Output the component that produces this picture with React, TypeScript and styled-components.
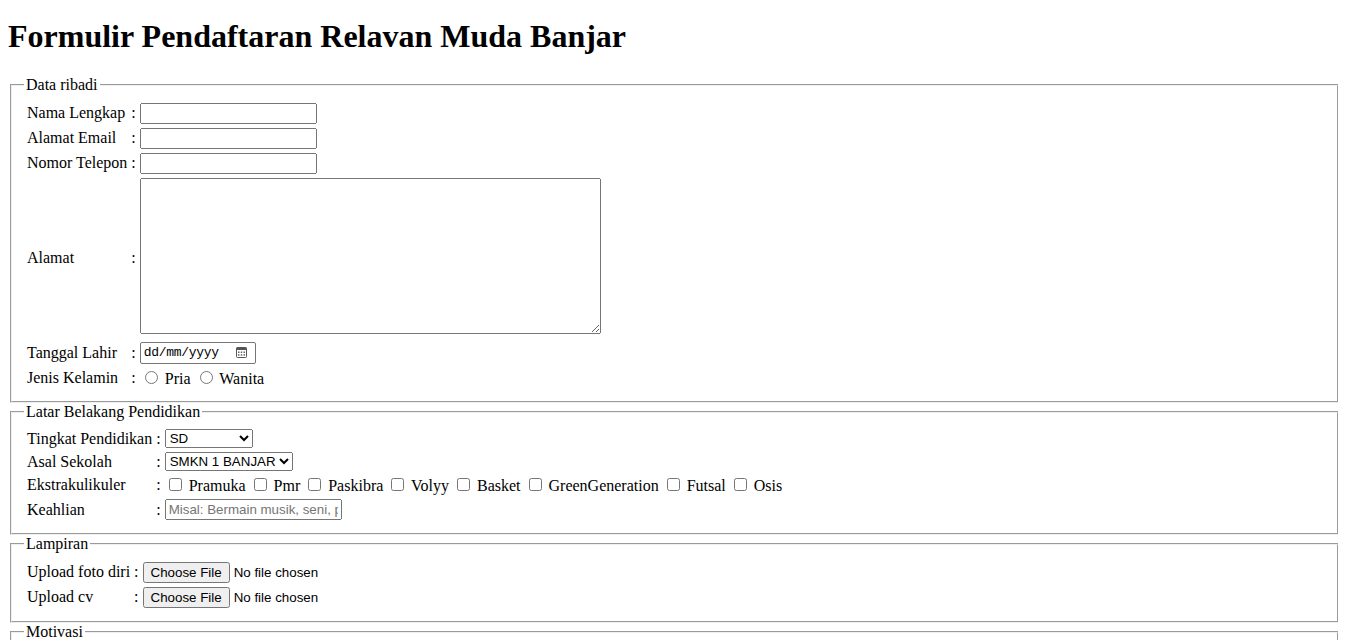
import React from "react";
import styled, { createGlobalStyle } from "styled-components";

const Global = createGlobalStyle`
  body {
    margin: 8px;
    font-family: "Liberation Serif", "Times New Roman", serif;
    font-size: 16px;
    color: #000;
    background: #fff;
  }
`;

const Title = styled.h1`
  font-size: 2em;
  font-weight: bold;
  margin: 9.5px 0 21.44px;
`;

const Fieldset = styled.fieldset`
  margin: 0 -1px 0 2px;
  padding: 0.35em 0.75em 0.625em;
`;

const Legend = styled.legend`
  padding: 0 2px;
`;

const FormTable = styled.table`
  border-spacing: 2px;
`;

const Cell = styled.td`
  padding: 1px;
  vertical-align: middle;
`;

const ColonCell = styled.td`
  padding: 1px;
  vertical-align: middle;
`;

const TextInput = styled.input`
  box-sizing: border-box;
  width: 177px;
  height: 21px;
  font-family: "Liberation Sans", Arial, sans-serif;
  font-size: 13.33px;
`;

const AddressArea = styled.textarea`
  box-sizing: border-box;
  width: 461px;
  height: 156px;
`;

const DateBox = styled.span`
  box-sizing: border-box;
  display: inline-flex;
  align-items: center;
  justify-content: space-between;
  width: 116px;
  height: 22px;
  padding: 0 8px 0 3px;
  border: 1px solid #767676;
  border-radius: 2px;
  vertical-align: middle;
  font-family: "Liberation Mono", "DejaVu Sans Mono", monospace;
  font-size: 13px;
  color: #000;
  background: #fff;
`;

const DateText = styled.span`
  letter-spacing: -0.3px;
`;

const Select = styled.select<{ $w: number }>`
  box-sizing: border-box;
  width: ${(p) => p.$w}px;
  height: 19px;
  font-family: "Liberation Sans", Arial, sans-serif;
  font-size: 13.33px;
`;

const OptionLabel = styled.label``;

const Row: React.FC<{ label: string; children: React.ReactNode }> = ({ label, children }) => (
  <tr>
    <Cell>{label}</Cell>
    <ColonCell>:</ColonCell>
    <Cell>{children}</Cell>
  </tr>
);

const CalendarIcon = () => (
  <svg width="11" height="11" viewBox="0 0 11 11" aria-hidden="true">
    <rect x="0.5" y="0.5" width="10" height="10" rx="1" fill="none" stroke="#555" />
    <rect x="0.5" y="0.5" width="10" height="2.5" fill="#555" />
    <rect x="2" y="4.5" width="1.5" height="1.5" fill="#666" />
    <rect x="4.75" y="4.5" width="1.5" height="1.5" fill="#666" />
    <rect x="7.5" y="4.5" width="1.5" height="1.5" fill="#666" />
    <rect x="2" y="7.2" width="1.5" height="1.5" fill="#666" />
    <rect x="4.75" y="7.2" width="1.5" height="1.5" fill="#666" />
    <rect x="7.5" y="7.2" width="1.5" height="1.5" fill="#666" />
  </svg>
);

const extras = ["Pramuka", "Pmr", "Paskibra", "Volyy", "Basket", "GreenGeneration", "Futsal", "Osis"];

export default function App() {
  return (
    <>
      <Global />
      <Title>Formulir Pendaftaran Relavan Muda Banjar</Title>
      <form>
        <Fieldset>
          <Legend>Data ribadi</Legend>
          <FormTable>
            <tbody>
              <Row label="Nama Lengkap">
                <TextInput type="text" />
              </Row>
              <Row label="Alamat Email">
                <TextInput type="email" />
              </Row>
              <Row label="Nomor Telepon">
                <TextInput type="tel" />
              </Row>
              <Row label="Alamat">
                <AddressArea cols={60} rows={10} />
              </Row>
              <Row label="Tanggal Lahir">
                <DateBox role="textbox" aria-label="Tanggal Lahir">
                  <DateText>dd/mm/yyyy</DateText>
                  <CalendarIcon />
                </DateBox>
              </Row>
              <Row label="Jenis Kelamin">
                <input type="radio" name="jk" id="pria" />
                <OptionLabel htmlFor="pria"> Pria</OptionLabel>{" "}
                <input type="radio" name="jk" id="wanita" />
                <OptionLabel htmlFor="wanita"> Wanita</OptionLabel>
              </Row>
            </tbody>
          </FormTable>
        </Fieldset>
        <Fieldset>
          <Legend>Latar Belakang Pendidikan</Legend>
          <FormTable>
            <tbody>
              <Row label="Tingkat Pendidikan">
                <Select $w={88}>
                  <option>SD</option>
                  <option>SMP</option>
                  <option>SMA/SMK</option>
                </Select>
              </Row>
              <Row label="Asal Sekolah">
                <Select $w={128}>
                  <option>SMKN 1 BANJAR</option>
                  <option>SMKN 2 BANJAR</option>
                </Select>
              </Row>
              <Row label="Ekstrakulikuler">
                {extras.map((e, i) => (
                  <React.Fragment key={e}>
                    {i > 0 ? " " : ""}
                    <input type="checkbox" id={e} />
                    <OptionLabel htmlFor={e}> {e}</OptionLabel>
                  </React.Fragment>
                ))}
              </Row>
              <Row label="Keahlian">
                <TextInput type="text" placeholder="Misal: Bermain musik, seni, pidato" />
              </Row>
            </tbody>
          </FormTable>
        </Fieldset>
        <Fieldset>
          <Legend>Lampiran</Legend>
          <FormTable>
            <tbody>
              <Row label="Upload foto diri">
                <input type="file" />
              </Row>
              <Row label="Upload cv">
                <input type="file" />
              </Row>
            </tbody>
          </FormTable>
        </Fieldset>
        <Fieldset>
          <Legend>Motivasi</Legend>
          <FormTable>
            <tbody>
              <Row label="Alasan bergabung">
                <AddressArea cols={60} rows={5} />
              </Row>
            </tbody>
          </FormTable>
        </Fieldset>
      </form>
    </>
  );
}
